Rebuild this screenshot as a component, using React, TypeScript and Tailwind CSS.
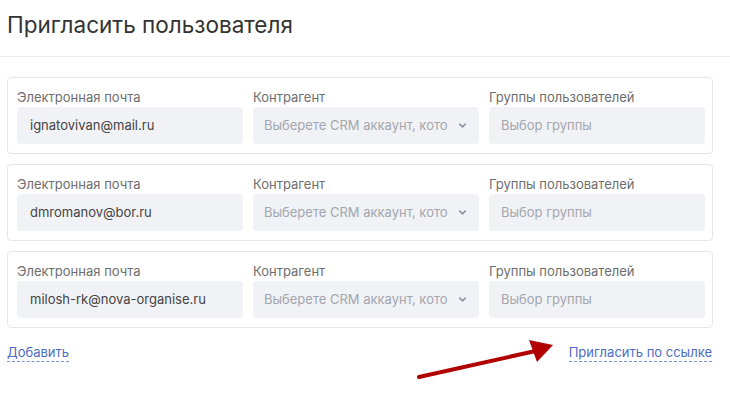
import { ChevronDown } from "lucide-react";

const rows = ["ignatovivan@mail.ru", "dmromanov@bor.ru", "milosh-rk@nova-organise.ru"];

const Field = ({ label, width, children }: { label: string; width: string; children: React.ReactNode }) => (
  <div className={width}>
    <div className="text-[13px] leading-[16px] text-[#6e6e6e] mb-[2px]">{label}</div>
    {children}
  </div>
);

export default function App() {
  return (
    <div className="relative w-[730px] h-[399px] bg-white font-['Inter',sans-serif] overflow-hidden">
      <div className="h-[57px] border-b border-[#ececef] pl-[7px] pt-[9px]">
        <h1 className="text-[22.5px] leading-[32px] text-[#333333] font-normal">Пригласить пользователя</h1>
      </div>

      <div className="pt-[20px] px-[7px] flex flex-col gap-[10px] w-[720px]">
        {rows.map((email, idx) => (
          <div key={idx} className="border border-[#e6e6e9] rounded-[4px] pl-[9px] pr-[7px] pt-[11px] pb-[9px] flex gap-[10px]">
            <Field label="Электронная почта" width="w-[226px]">
              <div className="h-[37px] rounded-[4px] bg-[#f1f2f6] pl-[13px] flex items-center text-[13px] text-[#444]">
                {email}
              </div>
            </Field>
            <Field label="Контрагент" width="w-[226px]">
              <div className="relative h-[37px] rounded-[4px] bg-[#f1f2f6] pl-[11px] pr-[28px] flex items-center text-[13px] text-[#a3a6ad]">
                <span className="whitespace-nowrap overflow-hidden">Выберете CRM аккаунт, кото</span>
                <ChevronDown className="absolute right-[11px] top-[13px] w-[11px] h-[11px] text-[#8e95a1]" strokeWidth={3.5} />
              </div>
            </Field>
            <Field label="Группы пользователей" width="flex-1">
              <div className="h-[37px] rounded-[4px] bg-[#f1f2f6] pl-[12px] flex items-center text-[13px] text-[#a3a6ad]">
                Выбор группы
              </div>
            </Field>
          </div>
        ))}
      </div>

      <div className="flex justify-between px-[7px] mt-[15px] w-[719px] text-[13px] leading-[18px] text-[#4b6cc2]">
        <span className="border-b border-dashed border-[#7c93d3]">Добавить</span>
        <span className="border-b border-dashed border-[#7c93d3]">Пригласить по ссылке</span>
      </div>

      <svg className="absolute left-[410px] top-[335px]" width="150" height="50" viewBox="0 0 150 50">
        <line x1="9" y1="42" x2="130" y2="15" stroke="#b00000" strokeWidth="4" strokeLinecap="round" />
        <polygon points="143,10 119,5 127,27" fill="#b00000" />
      </svg>
    </div>
  );
}
